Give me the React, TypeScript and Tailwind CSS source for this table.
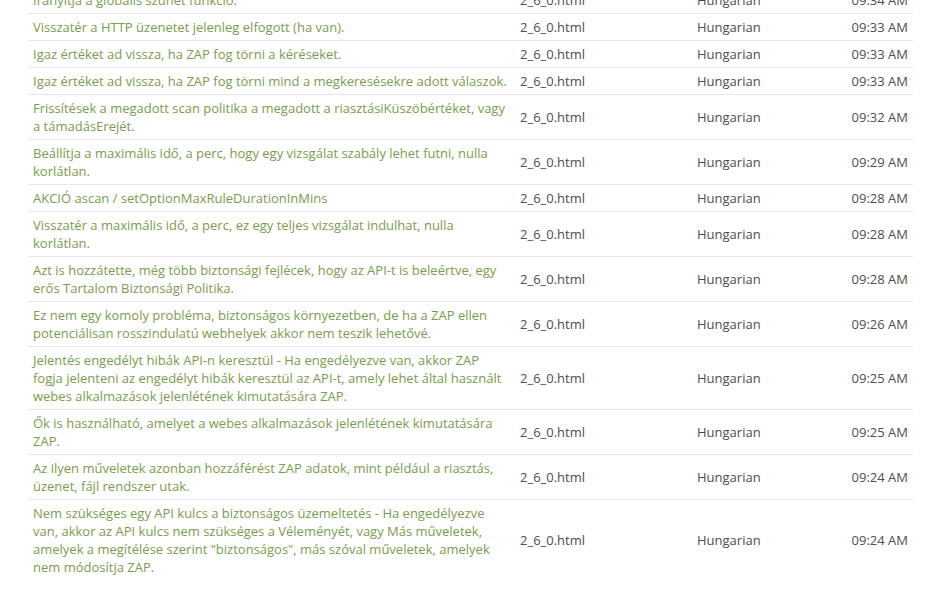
const rows = [
  { text: "Irányítja a globális szünet funkció.", time: "09:34 AM" },
  { text: "Visszatér a HTTP üzenetet jelenleg elfogott (ha van).", time: "09:33 AM" },
  { text: "Igaz értéket ad vissza, ha ZAP fog törni a kéréseket.", time: "09:33 AM" },
  { text: "Igaz értéket ad vissza, ha ZAP fog törni mind a megkeresésekre adott válaszok.", time: "09:33 AM" },
  { text: "Frissítések a megadott scan politika a megadott a riasztásiKüszöbértéket, vagy a támadásErejét.", time: "09:32 AM" },
  { text: "Beállítja a maximális idő, a perc, hogy egy vizsgálat szabály lehet futni, nulla korlátlan.", time: "09:29 AM" },
  { text: "AKCIÓ ascan / setOptionMaxRuleDurationInMins", time: "09:28 AM" },
  { text: "Visszatér a maximális idő, a perc, ez egy teljes vizsgálat indulhat, nulla korlátlan.", time: "09:28 AM" },
  { text: "Azt is hozzátette, még több biztonsági fejlécek, hogy az API-t is beleértve, egy erős Tartalom Biztonsági Politika.", time: "09:28 AM" },
  { text: "Ez nem egy komoly probléma, biztonságos környezetben, de ha a ZAP ellen potenciálisan rosszindulatú webhelyek akkor nem teszik lehetővé.", time: "09:26 AM" },
  { text: "Jelentés engedélyt hibák API-n keresztül - Ha engedélyezve van, akkor ZAP fogja jelenteni az engedélyt hibák keresztül az API-t, amely lehet által használt webes alkalmazások jelenlétének kimutatására ZAP.", time: "09:25 AM" },
  { text: "Ők is használható, amelyet a webes alkalmazások jelenlétének kimutatására ZAP.", time: "09:25 AM" },
  { text: "Az ilyen műveletek azonban hozzáférést ZAP adatok, mint például a riasztás, üzenet, fájl rendszer utak.", time: "09:24 AM" },
  { text: "Nem szükséges egy API kulcs a biztonságos üzemeltetés - Ha engedélyezve van, akkor az API kulcs nem szükséges a Véleményét, vagy Más műveletek, amelyek a megítélése szerint \"biztonságos\", más szóval műveletek, amelyek nem módosítja ZAP.", time: "09:24 AM" },
]

export default function App() {
  return (
    <div className="h-[609px] w-[946px] overflow-hidden bg-white font-['Open_Sans',sans-serif] text-[13px] leading-[18px]">
      <div className="-mt-[14px] pl-[28px] pr-[33px]">
        <table className="w-full table-fixed border-collapse">
          <colgroup>
            <col className="w-[487px]" />
            <col className="w-[177px]" />
            <col />
            <col className="w-[100px]" />
          </colgroup>
          <tbody>
            {rows.map((row, i) => (
              <tr key={i} className="border-t border-[#e6e6e6]">
                <td className="px-[5px] py-[4px] align-middle text-[#7a9c4e]">{row.text}</td>
                <td className="px-[5px] py-[4px] align-middle text-[#4d4d4d]">2_6_0.html</td>
                <td className="px-[5px] py-[4px] align-middle text-[#4d4d4d]">Hungarian</td>
                <td className="px-[5px] py-[4px] text-right align-middle text-[#4d4d4d]">{row.time}</td>
              </tr>
            ))}
          </tbody>
        </table>
      </div>
    </div>
  )
}
